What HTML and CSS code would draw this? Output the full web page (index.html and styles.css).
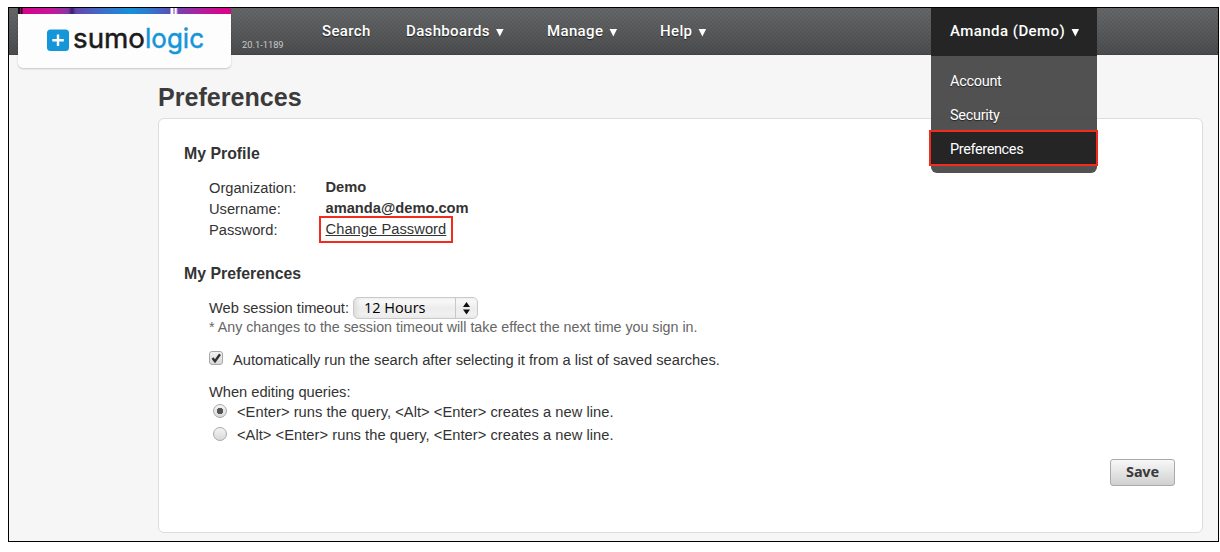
FILE: index.html
```html
<!DOCTYPE html>
<html lang="en">
<head>
<meta charset="utf-8">
<title>Preferences</title>
<link rel="stylesheet" href="styles.css">
</head>
<body>
<div class="frame">
  <header class="header">
    <div class="logo">
      <div class="logo-strip"></div>
      <svg class="logo-mark" width="160" height="34" viewBox="0 0 160 34">
        <rect x="0" y="6.500" width="22" height="21.500" rx="3.500" fill="#1496d8"/>
        <path d="M11 11.500v11.500M5.300 17.200h11.500" stroke="#fff" stroke-width="2.400"/>
        <text class="logo-text" x="26" y="24.700" textLength="72" lengthAdjust="spacingAndGlyphs" fill="#1b1b1b" stroke="#1b1b1b">sumo</text>
        <text class="logo-text" x="98" y="24.700" textLength="59" lengthAdjust="spacingAndGlyphs" fill="#1496d8" stroke="#1496d8">logic</text>
      </svg>
    </div>
    <span class="version">20.1-1189</span>
    <nav class="nav">
      <a class="nav-search">Search</a>
      <a class="nav-dash">Dashboards<i class="caret"></i></a>
      <a class="nav-manage">Manage<i class="caret"></i></a>
      <a>Help<i class="caret"></i></a>
    </nav>
    <div class="user">
      <div class="user-name">Amanda (Demo)<i class="caret"></i></div>
      <div class="menu">
        <a>Account</a>
        <a>Security</a>
        <a class="active">Preferences</a>
      </div>
    </div>
  </header>
  <main class="main">
    <h1>Preferences</h1>
    <section class="panel">
      <h2>My Profile</h2>
      <dl class="profile">
        <dt>Organization:</dt><dd class="org">Demo</dd>
        <dt>Username:</dt><dd class="mail">amanda@demo.com</dd>
        <dt>Password:</dt><dd><a class="change">Change Password</a></dd>
      </dl>
      <h2 class="second">My Preferences</h2>
      <div class="prefs">
        <div class="timeout">
          <span class="timeout-label">Web session timeout:</span>
          <div class="select"><span class="select-value">12 Hours</span>
            <svg class="select-arrows" width="21" height="20" viewBox="0 0 21 20"><path d="M10.500 4l3.500 5h-7zM10.500 16.500l3.500-5h-7z" fill="#111"/></svg>
          </div>
        </div>
        <div class="note">* Any changes to the session timeout will take effect the next time you sign in.</div>
        <div class="auto">
          <span class="check"><svg width="12" height="12" viewBox="0 0 12 12"><path d="M2.500 6l2.500 3.200L10 2.200" fill="none" stroke="#333" stroke-width="2.400"/></svg></span>
          <span class="auto-label">Automatically run the search after selecting it from a list of saved searches.</span>
        </div>
        <div class="editing">When editing queries:</div>
        <div class="option"><span class="radio on"></span><span>&lt;Enter&gt; runs the query, &lt;Alt&gt; &lt;Enter&gt; creates a new line.</span></div>
        <div class="option"><span class="radio"></span><span>&lt;Alt&gt; &lt;Enter&gt; runs the query, &lt;Enter&gt; creates a new line.</span></div>
      </div>
      <button class="save">Save</button>
    </section>
  </main>
</div>
</body>
</html>
```
FILE: styles.css
```css
* { box-sizing: border-box; }
body {
  margin: 0;
  padding: 7px 0 0 8px;
  background: #fff;
  color: #333;
  font: 14.680px/21px "Liberation Sans", Arial, sans-serif;
}
.frame {
  width: 1211px;
  height: 535px;
  border: 1px solid #000;
  background: #f6f6f6;
}
.header {
  display: flex;
  height: 47px;
  padding-left: 9px;
  background:
    radial-gradient(circle, rgba(0, 0, 0, .07) 0 1px, transparent 1.300px) 0 0 / 4px 4px,
    radial-gradient(circle, rgba(0, 0, 0, .07) 0 1px, transparent 1.300px) 2px 2px / 4px 4px,
    linear-gradient(#666869, #4c4d4f);
  box-shadow: inset 0 -1px #444;
}
.logo {
  width: 213px;
  height: 60px;
  flex: none;
  overflow: hidden;
  border-radius: 0 0 5px 5px;
  background: #fdfdfd;
  box-shadow: 0 1px 2px rgba(0, 0, 0, .2);
}
.logo-strip {
  height: 6px;
  background: linear-gradient(90deg, #111 0 2px, #a00070 2px 3px, #111 3px 4px, #d5048c 5px, #c8149a 32px, #8a35a5 50px, #35206e 54px, #6545b0 58px, #3b6fca 85px, #1590d8 112px, #2b7ccc 130px, #5c50b8 152px, #fff 153px 155px, #6545b0 156px, #fff 157px 158px, #7542b0 160px, #b01fa0 182px, #d8058c 205px);
}
.logo-mark { display: block; margin: 9px 0 0 29px; overflow: visible; }
.logo-text { font: 27px Inter, sans-serif; stroke-width: .5px; }
.version { width: 91px; padding: 28px 0 0 11px; color: #c9c9c9; font: 9.300px/18px Roboto, sans-serif; }
.nav { display: flex; width: 600px; color: #fff; font: 500 15px/46px Roboto, sans-serif; text-shadow: 0 1px 1px #222; letter-spacing: .35px; }
.nav a { display: flex; align-items: center; height: 46px; }
.nav-search { width: 84px; }
.nav-dash { width: 141px; }
.nav-manage { width: 113px; }
.caret { width: 8px; height: 8px; margin: 3px 0 0 6px; background: #fff; clip-path: polygon(0 0, 100% 0, 50% 100%); }
.user { z-index: 2; width: 166px; height: 165px; margin-left: 9px; color: #fff; }
.user-name { display: flex; align-items: center; height: 48px; padding: 0 0 2px 19px; background: #252525; font: 500 15px/46px Roboto, sans-serif; letter-spacing: .45px; }
.menu { height: 117px; padding-top: 9px; border-radius: 0 0 6px 6px; background: rgba(68, 68, 68, .93); font: 14.500px/34px Roboto, sans-serif; letter-spacing: -.3px; }
.menu a { display: block; height: 34px; padding-left: 19px; text-shadow: 0 1px 1px #222; }
.menu .active { height: 36px; margin: -3px -1px 0 -2px; padding: 1px 0 0 19px; border: 2px solid #f22c1c; background: #252525; letter-spacing: -.38px; }
.main { padding: 27px 0 0 149px; }
h1 { margin: 0; color: #3b3b3b; font-size: 25.100px; line-height: 30px; }
.panel { width: 1045px; height: 415px; margin-top: 6px; padding: 25px; border: 1px solid #ddd; border-radius: 6px; background: #fff; }
h2 { margin: 0; font-size: 15.850px; line-height: 20px; }
.profile { display: grid; grid-template-columns: 116.500px 1fr; grid-auto-rows: 21px; margin: 13px 0 0 25px; line-height: 23px; }
.profile dd { margin: 0; line-height: 21px; }
.org, .mail { font-weight: bold; }
.change { display: block; width: 134px; height: 27px; margin: -3px 0 0 -6.500px; padding: 1px 0 0 4.500px; border: 2px solid #f22c1c; text-decoration: underline; letter-spacing: .06px; }
.second { margin-top: 24px; }
.prefs { margin: 13px 0 0 25px; }
.timeout { display: flex; gap: 4px; height: 22px; }
.timeout-label { width: 140px; white-space: nowrap; line-height: 23px; }
.select { display: flex; width: 125px; height: 22px; border: 1px solid #c9c9c9; border-radius: 5px; background: linear-gradient(#fff, #ececec 50%, #f3f3f3); box-shadow: inset 3px 0 4px #ddd; }
.select-value { width: 102px; padding-left: 10px; border-right: 1px solid #c8c8c8; color: #000; font: 14.500px/20px "Open Sans", sans-serif; }
.note { height: 18px; color: #666; font-size: 14.250px; line-height: 17px; }
.auto { display: flex; gap: 10px; height: 22px; margin-top: 12px; }
.auto-label { line-height: 22px; }
.check { width: 14px; height: 14px; margin-top: 2px; border: 1px solid #a8a8a8; border-radius: 3px; background: linear-gradient(#f2f2f2, #d8d8d8); }
.check svg { display: block; }
.editing { margin-top: 11px; line-height: 20px; letter-spacing: -.02px; }
.option { display: flex; gap: 10px; height: 23px; padding-left: 4px; line-height: 20px; letter-spacing: .045px; }
.radio { width: 14px; height: 14px; margin-top: 2px; border: 1px solid #aaa; border-radius: 50%; background: linear-gradient(#f4f4f4, #d8d8d8); }
.radio.on { background: radial-gradient(circle, #555 0 3px, transparent 3.500px), linear-gradient(#f4f4f4, #d8d8d8); }
.save { display: block; width: 65px; height: 27px; margin: 11px 2px 0 auto; padding: 0 0 4px; border: 1px solid #aaa; border-radius: 3px; background: linear-gradient(#f8f8f8, #d0d0d0); color: #3a3a3a; font: bold 14.500px/20px "Noto Sans", sans-serif; letter-spacing: -.2px; }
```
